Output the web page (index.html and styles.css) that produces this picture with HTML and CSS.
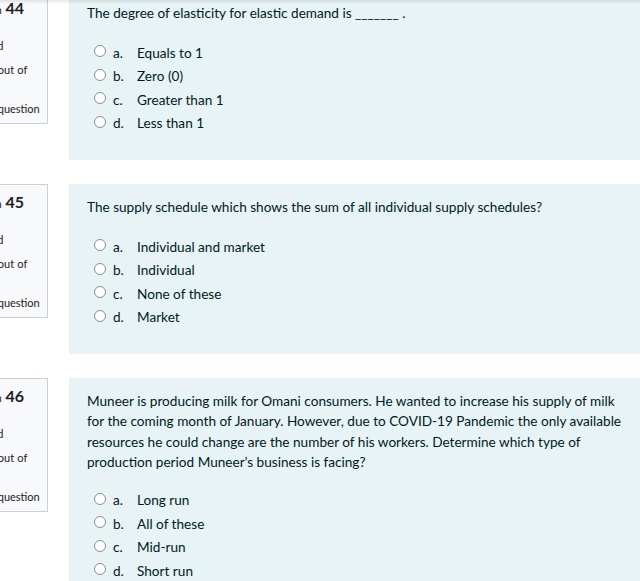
FILE: index.html
```html
<!DOCTYPE html>
<html lang="en">
<head>
<meta charset="utf-8">
<title>Quiz</title>
<link rel="stylesheet" href="styles.css">
</head>
<body>
<div class="top-shadow"></div>
<main class="quiz">
  <section class="que">
    <div class="info">
      <div class="line qno">Question <b>44</b></div>
      <div class="line">Not yet</div>
      <div class="line">answered</div>
      <div class="line grade">Marked out of</div>
      <div class="line">1.00</div>
      <div class="line flag"><svg class="flag-icon" width="14" height="14" viewBox="0 0 14 14"><path d="M2 1v12M2 2h8l-2 3 2 3H2" fill="none" stroke="#888" stroke-width="1.2"/></svg>Flag question</div>
    </div>
    <div class="formulation">
      <div class="qtext">The degree of elasticity for elastic demand is _______ .</div>
      <div class="answers">
        <label class="opt"><span class="radio"></span><span class="letter">a.</span><span>Equals to 1</span></label>
        <label class="opt"><span class="radio"></span><span class="letter">b.</span><span>Zero (0)</span></label>
        <label class="opt"><span class="radio"></span><span class="letter">c.</span><span>Greater than 1</span></label>
        <label class="opt"><span class="radio"></span><span class="letter">d.</span><span>Less than 1</span></label>
      </div>
    </div>
  </section>

  <section class="que">
    <div class="info">
      <div class="line qno">Question <b>45</b></div>
      <div class="line">Not yet</div>
      <div class="line">answered</div>
      <div class="line grade">Marked out of</div>
      <div class="line">1.00</div>
      <div class="line flag"><svg class="flag-icon" width="14" height="14" viewBox="0 0 14 14"><path d="M2 1v12M2 2h8l-2 3 2 3H2" fill="none" stroke="#888" stroke-width="1.2"/></svg>Flag question</div>
    </div>
    <div class="formulation">
      <div class="qtext">The supply schedule which shows the sum of all individual supply schedules?</div>
      <div class="answers">
        <label class="opt"><span class="radio"></span><span class="letter">a.</span><span>Individual and market</span></label>
        <label class="opt"><span class="radio"></span><span class="letter">b.</span><span>Individual</span></label>
        <label class="opt"><span class="radio"></span><span class="letter">c.</span><span>None of these</span></label>
        <label class="opt"><span class="radio"></span><span class="letter">d.</span><span>Market</span></label>
      </div>
    </div>
  </section>

  <section class="que">
    <div class="info">
      <div class="line qno">Question <b>46</b></div>
      <div class="line">Not yet</div>
      <div class="line">answered</div>
      <div class="line grade">Marked out of</div>
      <div class="line">1.00</div>
      <div class="line flag"><svg class="flag-icon" width="14" height="14" viewBox="0 0 14 14"><path d="M2 1v12M2 2h8l-2 3 2 3H2" fill="none" stroke="#888" stroke-width="1.2"/></svg>Flag question</div>
    </div>
    <div class="formulation">
      <div class="qtext long">Muneer is producing milk for Omani consumers. He wanted to increase his supply of milk for the coming month of January. However, due to COVID-19 Pandemic the only available resources he could change are the number of his workers. Determine which type of production period Muneer’s business is facing?</div>
      <div class="answers">
        <label class="opt"><span class="radio"></span><span class="letter">a.</span><span>Long run</span></label>
        <label class="opt"><span class="radio"></span><span class="letter">b.</span><span>All of these</span></label>
        <label class="opt"><span class="radio"></span><span class="letter">c.</span><span>Mid-run</span></label>
        <label class="opt"><span class="radio"></span><span class="letter">d.</span><span>Short run</span></label>
      </div>
    </div>
  </section>
</main>
</body>
</html>
```

FILE: styles.css
```css
html, body {
  margin: 0;
  padding: 0;
  background: #ffffff;
  overflow: hidden;
}

body {
  font-family: "Lato", "Liberation Sans", sans-serif;
  color: #1d2125;
  width: 640px;
  height: 581px;
}

.top-shadow {
  position: fixed;
  top: 0;
  left: 0;
  right: 0;
  height: 4px;
  background: linear-gradient(rgba(0, 0, 0, 0.09), rgba(0, 0, 0, 0));
  pointer-events: none;
  z-index: 5;
}

.quiz {
  display: flex;
  flex-direction: column;
  gap: 24px;
  margin-top: -10px;
}

.que {
  display: flex;
  align-items: flex-start;
}

.info {
  box-sizing: border-box;
  flex: none;
  width: 98px;
  height: 134px;
  margin-left: -50px;
  margin-right: 21px;
  padding: 7px 0 0 6px;
  background: #f8f9fa;
  border: 1px solid #cad0d7;
  font-size: 11px;
  color: #1d2125;
}

.line {
  height: 19px;
  line-height: 19px;
  white-space: nowrap;
}

.qno b {
  font-size: 16px;
  font-weight: 700;
  margin-left: 1px;
}

.grade {
  margin-top: 5px;
  letter-spacing: 0.15px;
}

.flag {
  margin-top: 1px;
  display: flex;
  align-items: center;
  gap: 4px;
}

.formulation {
  flex: 1;
  box-sizing: border-box;
  background: #e7f3f5;
  padding: 12.5px 18px 25px 18px;
  color: #001a1e;
  font-size: 13.6px;
}

.qtext {
  line-height: 20.5px;
  margin-bottom: 18px;
  max-width: 545px;
}

.qtext.long {
  margin-bottom: 16px;
}

.answers {
  display: flex;
  flex-direction: column;
}

.opt {
  display: flex;
  align-items: center;
  height: 23.5px;
}

.radio {
  box-sizing: border-box;
  width: 12px;
  height: 12px;
  margin-left: 7px;
  margin-right: 7px;
  margin-top: -3px;
  border: 1px solid #8a8d91;
  border-radius: 50%;
  background: #ffffff;
  flex: none;
}

.letter {
  width: 24px;
  flex: none;
}
```
